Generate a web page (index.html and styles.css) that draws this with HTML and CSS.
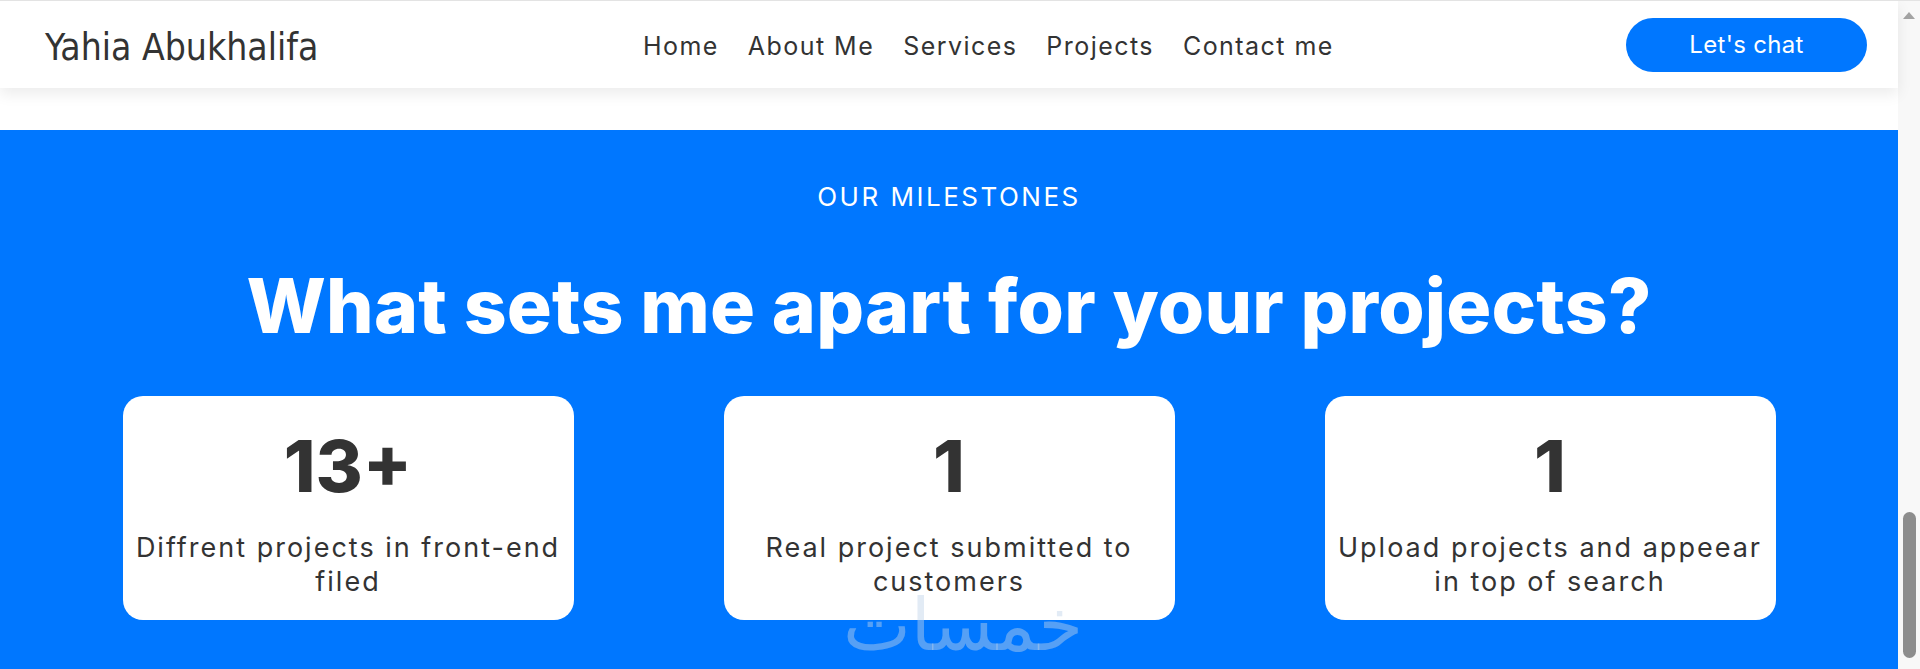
FILE: index.html
```html
<!DOCTYPE html>
<html lang="en">
<head>
    <meta charset="UTF-8">
    <meta name="viewport" content="width=device-width, initial-scale=1.0">
    <title>Yahia Abukhalifa</title>
    <link rel="stylesheet" href="styles.css">
</head>
<body>
    <div class="page">
        <div class="main">
            <header class="header">
                <div class="logo">Yahia Abukhalifa</div>
                <nav class="nav">
                    <a href="#">Home</a>
                    <a href="#">About Me</a>
                    <a href="#">Services</a>
                    <a href="#">Projects</a>
                    <a href="#">Contact me</a>
                </nav>
                <a href="#" class="chat-btn">Let's chat</a>
            </header>

            <section class="milestones">
                <p class="eyebrow">OUR MILESTONES</p>
                <h2 class="title">What sets me apart for your projects?</h2>
                <div class="cards">
                    <div class="card">
                        <h3>13+</h3>
                        <p>Diffrent projects in front-end filed</p>
                    </div>
                    <div class="card">
                        <h3>1</h3>
                        <p>Real project submitted to customers</p>
                    </div>
                    <div class="card">
                        <h3>1</h3>
                        <p>Upload projects and appeear in top of search</p>
                    </div>
                </div>
                <div class="watermark">خمسات</div>
            </section>
        </div>

        <!-- fake browser scrollbar -->
        <div class="scrollbar">
            <span class="arrow"></span>
            <span class="thumb"></span>
        </div>
    </div>
</body>
</html>
```

FILE: styles.css
```css
* {
    box-sizing: border-box;
}
html, body {
    margin: 0;
    height: 100%;
    overflow: hidden;
}
body {
    font-family: Inter, "Open Sans", sans-serif;
    color: #333;
    background-color: #fff;
    border-top: 1px solid #e3e3e3;
}
.page {
    display: flex;
    height: 100%;
}
.main {
    flex: 1;
    display: flex;
    flex-direction: column;
}
.header {
    display: flex;
    align-items: center;
    height: 87px;
    padding: 0 31px 0 45px;
    background-color: #fff;
    box-shadow: 0 6px 14px rgba(0, 0, 0, 0.08);
    position: relative;
    z-index: 1;
}
.logo {
    width: 598px;
    padding-top: 5px;
    font-family: "DejaVu Sans Condensed", "DejaVu Sans", sans-serif;
    font-stretch: condensed;
    font-size: 37px;
    color: #333;
}
.nav {
    display: flex;
    gap: 29px;
    padding-top: 3px;
}
.nav a {
    color: #333;
    text-decoration: none;
    font-size: 25px;
    letter-spacing: 1.45px;
}
.chat-btn {
    margin-left: auto;
    width: 241px;
    height: 54px;
    border-radius: 27px;
    background-color: #0077ff;
    color: #fff;
    text-decoration: none;
    font-size: 24px;
    letter-spacing: 0.3px;
    display: flex;
    align-items: center;
    justify-content: center;
}
.milestones {
    flex: 1;
    margin-top: 42px;
    background-color: #0077ff;
    color: #fff;
    text-align: center;
    padding-top: 51px;
    position: relative;
}
.eyebrow {
    margin: 0;
    font-size: 26px;
    letter-spacing: 2.5px;
}
.title {
    margin: 49px 0 0;
    font-size: 75px;
    font-weight: 800;
    line-height: 1.2;
    letter-spacing: 0.2px;
}
.cards {
    display: flex;
    justify-content: center;
    gap: 150px;
    margin-top: 45px;
}
.card {
    width: 451px;
    min-height: 224px;
    background-color: #fff;
    border-radius: 20px;
    color: #333;
    padding: 27px 10px 10px;
}
.card h3 {
    margin: 0;
    font-size: 72px;
    font-weight: 800;
    line-height: 1.2;
}
.card p {
    margin: 22px 0 0;
    font-size: 27px;
    line-height: 34px;
    letter-spacing: 2px;
}
.watermark {
    position: absolute;
    left: 843px;
    top: 474px;
    font-family: "DejaVu Sans", sans-serif;
    font-size: 72px;
    line-height: 0.6;
    color: rgba(190, 210, 232, 0.45);
}
.scrollbar {
    width: 22px;
    background-color: #f8f8f8;
    display: flex;
    flex-direction: column;
    align-items: center;
}
.arrow {
    margin-top: 11px;
    border-left: 6px solid transparent;
    border-right: 6px solid transparent;
    border-bottom: 7px solid #a3a3a3;
}
.thumb {
    margin-top: 493px;
    width: 13px;
    height: 146px;
    border-radius: 7px;
    background-color: #8d8d8d;
}
```
